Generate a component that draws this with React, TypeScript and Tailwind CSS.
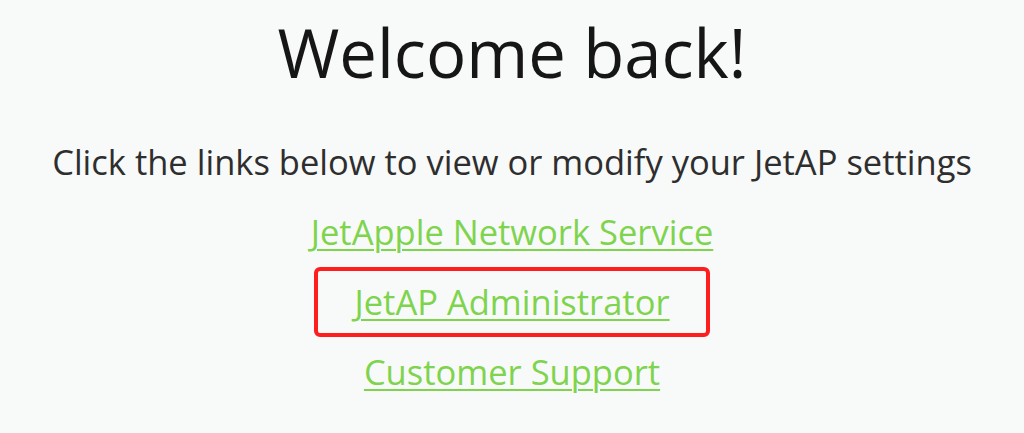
import React from 'react';

const links = [
  { label: 'JetApple Network Service', highlighted: false },
  { label: 'JetAP Administrator', highlighted: true },
  { label: 'Customer Support', highlighted: false },
];

export default function App() {
  return (
    <div className="flex h-[433px] w-[1024px] flex-col items-center overflow-hidden bg-[#f8f9f9] font-['Open_Sans',sans-serif]">
      <h1 className="mt-[12px] text-[67px] leading-[80px] font-normal text-[#161616]">Welcome back!</h1>

      <p className="mt-[46px] text-[34.5px] leading-[48px] text-[#2e2e2e]">
        Click the links below to view or modify your JetAP settings
      </p>

      <div className="mt-[11px] flex flex-col items-center">
        {links.map((link) => (
          <div
            key={link.label}
            className={
              link.highlighted
                ? 'flex h-[70px] w-[396px] items-center justify-center rounded-[6px] border-[4px] border-[#ff1e1e]'
                : 'flex h-[70px] items-center justify-center'
            }
          >
            <a
              href="#"
              className="text-[34.5px] leading-[48px] text-[#7ed44c] underline decoration-2 underline-offset-[4px]"
            >
              {link.label}
            </a>
          </div>
        ))}
      </div>
    </div>
  );
}
